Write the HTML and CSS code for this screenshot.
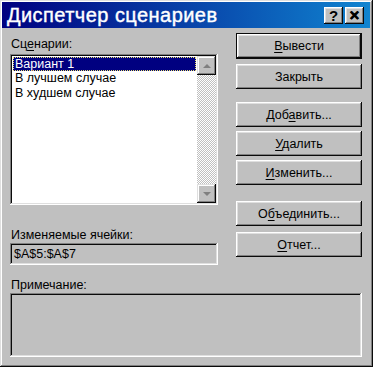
FILE: index.html
```html
<!DOCTYPE html>
<html>
<head>
  <meta charset=utf-8>
  <title>Диспетчер сценариев</title>
  <link rel="stylesheet" href="styles.css">
</head>
<body>

<div class=window>
  <div class=titlebar>
    <span class=title>Диспетчер сценариев</span>
    <div class=tbtns>
      <span class=tbtn>?</span>
      <span class="tbtn close">&#x2715;</span>
    </div>
  </div>

  <div class=content>
    <div class=top>
      <div class=left>
        <div class="label first">Сц<u>е</u>нарии:</div>
        <div class=list>
          <div class=items>
            <div class="item sel">Вариант 1</div>
            <div class=item>В лучшем случае</div>
            <div class=item>В худшем случае</div>
          </div>
          <div class=scroll>
            <div class="sbtn up"><i></i></div>
            <div class=track></div>
            <div class="sbtn down"><i></i></div>
          </div>
        </div>
        <div class="label cells">Изменяемые ячейки:</div>
        <div class=field>$A$5:$A$7</div>
      </div>

      <div class=right>
        <button class="btn default"><u>В</u>ывести</button>
        <button class=btn>Закрыть</button>
        <button class="btn gap">Доб<u>а</u>вить...</button>
        <button class=btn><u>У</u>далить</button>
        <button class=btn><u>И</u>зменить...</button>
        <button class="btn gap2">О<u>б</u>ъединить...</button>
        <button class=btn><u>О</u>тчет...</button>
      </div>
    </div>

    <div class="label note-label">Примечание:</div>
    <div class=note></div>
  </div>
</div>

</body>
</html>
```

FILE: styles.css
```css
* {
  box-sizing: border-box;
  }
html, body {
  margin: 0;
  padding: 0;
  background: #c0c0c0;
  }
body {
  font: normal 12.5px "Liberation Sans", Arial, sans-serif;
  color: #000;
  }
u {
  text-decoration: underline;
  text-underline-offset: 2px;
  }
.window {
  width: 373px;
  height: 367px;
  padding: 2px 3px 3px 2px;
  background: #c0c0c0;
  box-shadow: inset -1px -1px #0a0a0a, inset 1px 1px #dfdfdf, inset -2px -2px #808080, inset 2px 2px #fff;
  display: flex;
  flex-direction: column;
  }
.titlebar {
  height: 26px;
  display: flex;
  align-items: center;
  justify-content: space-between;
  padding: 0 6px 0 5px;
  background: linear-gradient(to right, #000080, #1084d0);
  }
.title {
  color: #fff;
  font: normal 20px "Liberation Sans", Arial, sans-serif;
  letter-spacing: 0.45px;
  -webkit-text-stroke: 0.4px #fff;
  }
.tbtns {
  display: flex;
  gap: 2px;
  }
.tbtn {
  width: 19px;
  height: 17px;
  background: #c0c0c0;
  box-shadow: inset -1px -1px #0a0a0a, inset 1px 1px #fff, inset -2px -2px #808080, inset 2px 2px #dfdfdf;
  font: bold 15px "Liberation Sans", Arial, sans-serif;
  line-height: 17px;
  text-align: center;
  }
.tbtn.close {
  font-size: 13px;
  -webkit-text-stroke: 0.6px #000;
  }
.content {
  flex: 1;
  padding: 5px 8px 0 8px;
  }
.top {
  display: flex;
  justify-content: space-between;
  }
.left {
  width: 208px;
  }
.label {
  line-height: 16px;
  padding-left: 1px;
  }
.label.first {
  margin-top: 3px;
  margin-bottom: 2px;
  }
.label.cells {
  margin-top: 22px;
  }
.list {
  height: 151px;
  display: flex;
  background: #fff;
  padding: 2px;
  box-shadow: inset -1px -1px #fff, inset 1px 1px #808080, inset -2px -2px #dfdfdf, inset 2px 2px #0a0a0a;
  }
.items {
  flex: 1;
  padding: 1px 1px 0 1px;
  }
.item {
  height: 14.5px;
  line-height: 14px;
  padding-left: 2px;
  white-space: nowrap;
  }
.item.sel {
  height: 14px;
  background: #000080;
  color: #fff;
  outline: 1px dotted #e8e070;
  outline-offset: -1px;
  }
.scroll {
  width: 19px;
  display: flex;
  flex-direction: column;
  }
.track {
  flex: 1;
  background-color: #fff;
  background-image: conic-gradient(#c0c0c0 25%, #fff 0 50%, #c0c0c0 0 75%, #fff 0);
  background-size: 2px 2px;
  }
.sbtn {
  height: 19px;
  background: #c0c0c0;
  box-shadow: inset -1px -1px #0a0a0a, inset 1px 1px #dfdfdf, inset -2px -2px #808080, inset 2px 2px #fff;
  display: flex;
  align-items: center;
  justify-content: center;
  }
.sbtn i {
  width: 0;
  height: 0;
  border-left: 4px solid transparent;
  border-right: 4px solid transparent;
  }
.sbtn.up i {
  border-bottom: 4px solid #808080;
  }
.sbtn.down i {
  border-top: 4px solid #808080;
  }
.field {
  height: 22px;
  line-height: 22px;
  padding-left: 4px;
  background: #c0c0c0;
  box-shadow: inset -1px -1px #fff, inset 1px 1px #808080, inset -2px -2px #dfdfdf, inset 2px 2px #0a0a0a;
  }
.right {
  width: 126px;
  display: flex;
  flex-direction: column;
  gap: 4px;
  }
.btn {
  height: 25px;
  padding: 0;
  border: none;
  background: #c0c0c0;
  font: normal 12.5px "Liberation Sans", Arial, sans-serif;
  color: #000;
  box-shadow: inset -1px -1px #0a0a0a, inset 1px 1px #fff, inset -2px -2px #808080, inset 2px 2px #dfdfdf;
  }
.btn.default {
  height: 26px;
  border: 1px solid #0a0a0a;
  margin-bottom: 1px;
  }
.btn.gap {
  margin-top: 9px;
  }
.btn.gap2 {
  margin-top: 12px;
  margin-bottom: 2px;
  }
.label.note-label {
  margin-top: 13px;
  line-height: 15px;
  }
.note {
  height: 64px;
  background: #c0c0c0;
  box-shadow: inset -1px -1px #fff, inset 1px 1px #808080, inset -2px -2px #dfdfdf, inset 2px 2px #0a0a0a;
  }
```
